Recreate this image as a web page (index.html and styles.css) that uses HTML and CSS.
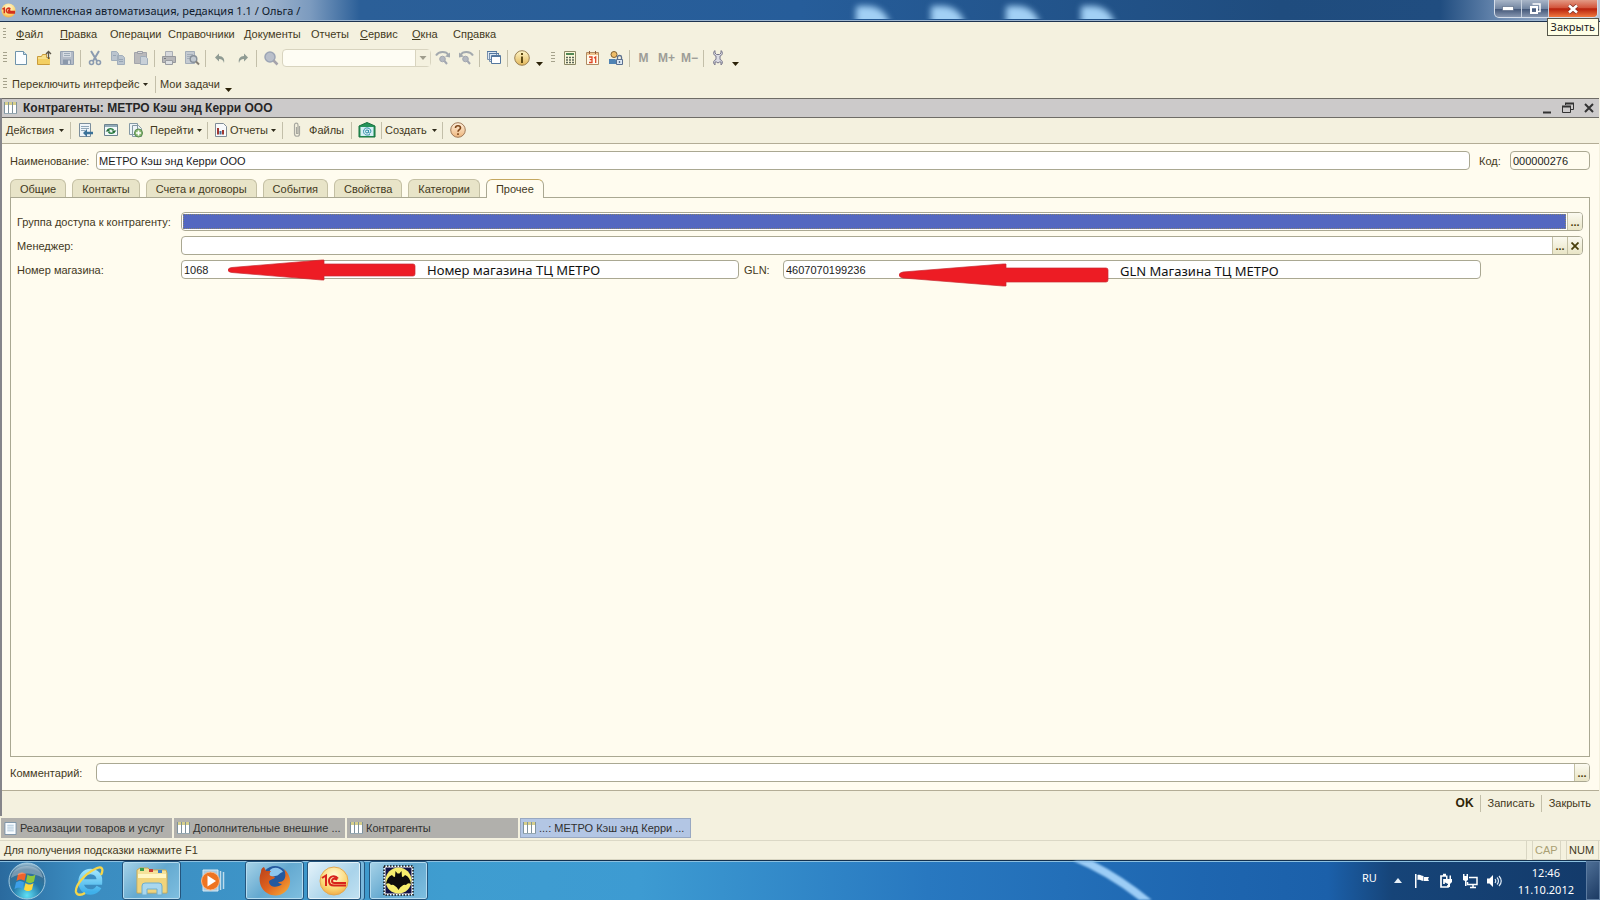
FILE: index.html
```html
<!DOCTYPE html>
<html lang="ru">
<head>
<meta charset="utf-8">
<title>Комплексная автоматизация, редакция 1.1</title>
<link rel="stylesheet" href="styles.css">
</head>
<body>
<svg class="defs" aria-hidden="true">
  <defs>
    <linearGradient id="gold" x2="0" y2="1"><stop offset="0" stop-color="#fff6c8"/><stop offset="1" stop-color="#e2b75a"/></linearGradient>
    <linearGradient id="peach" x2="0" y2="1"><stop offset="0" stop-color="#fff0dc"/><stop offset="1" stop-color="#edb57c"/></linearGradient>
    <radialGradient id="orb" cx=".5" cy=".9" r=".9"><stop offset="0" stop-color="#5fe0f5"/><stop offset=".45" stop-color="#2478a8"/><stop offset=".8" stop-color="#3b6c8f"/><stop offset="1" stop-color="#a5c8dc"/></radialGradient>
    <radialGradient id="one" cx=".5" cy=".3" r=".8"><stop offset="0" stop-color="#fffbd8"/><stop offset=".6" stop-color="#fbd774"/><stop offset="1" stop-color="#ee9a35"/></radialGradient>
    <linearGradient id="ie" x2="0" y2="1"><stop offset="0" stop-color="#9be2fb"/><stop offset="1" stop-color="#3fb0ea"/></linearGradient>
    <linearGradient id="fox" x2="1" y2="1"><stop offset="0" stop-color="#b8401a"/><stop offset=".5" stop-color="#e0631e"/><stop offset="1" stop-color="#f9b23a"/></linearGradient>
    <symbol id="table" viewBox="0 0 13 12"><path fill="#fff" d="M0 0h13v12H0z"/><path fill="#d6cf8c" d="M0 0h13v3H0z"/><path stroke="#7f929c" fill="none" d="M.5 0v12M4.5 0v12M8.5 0v12M12.5 0v12"/><path stroke="#93a6b0" d="M0 11.500h13"/></symbol>
    <symbol id="doc" viewBox="0 0 13 14"><path fill="#f8fcff" stroke="#7790a5" d="M.5.500h12v13H.5z"/><path stroke="#a9c4d8" d="M3 3.500h7M3 5.500h7M3 7.500h7M3 9.500h7"/></symbol>
    <symbol id="caret" viewBox="0 0 5 3"><path fill="#2e2a1a" d="M0 0h5L2.500 3z"/></symbol>
    <symbol id="caret-big" viewBox="0 0 7 4"><path fill="#2b2208" d="M0 0h7L3.500 4z"/></symbol>
  </defs>
</svg>

<header class="titlebar">
  <svg class="app-logo" viewBox="0 0 16 16"><circle cx="8" cy="8" r="7.500" fill="url(#one)"/><path fill="none" stroke="#d4301c" stroke-width="1.600" d="M1.500 6.500l2-1V11M10 6.300C8 4.500 5.500 6 5.700 8.300c.2 1.800 1.500 2.300 3 2.300H15M10 7.800c-1-.6-2-.3-2 .5s.5.700 1.200.7H15"/></svg>
  <h1 class="app-title">Комплексная автоматизация, редакция 1.1 / Ольга /</h1>
  <div class="glow"><i></i><i></i><i></i><i></i></div>
  <div class="sysbuttons">
    <button class="sys" aria-label="Свернуть"><svg width="12" height="5"><path fill="#fff" stroke="#4c5c78" stroke-width=".6" d="M.5.500h11v4H.5z"/></svg></button>
    <button class="sys" aria-label="Восстановить"><svg width="12" height="12"><path fill="none" stroke="#fff" stroke-width="1.500" d="M3.500 1h7.500v7.500H9"/><path fill="none" stroke="#fff" stroke-width="2" d="M2 4h6v6H2z"/></svg></button>
    <button class="sys sys-close" aria-label="Закрыть окно"><svg width="12" height="10"><path stroke="#7d3129" stroke-width="4" d="M2 1.500l8 7M10 1.500l-8 7"/><path stroke="#fff" stroke-width="2.600" d="M2 1.500l8 7M10 1.500l-8 7"/></svg></button>
    <span class="tooltip">Закрыть</span>
  </div>
</header>

<nav class="menu">
  <i class="grip"></i>
  <a href="#"><u>Ф</u>айл</a><a href="#"><u>П</u>равка</a><a href="#">Операции</a><a href="#">Справочники</a><a href="#">Документы</a><a href="#">Отчеты</a><a href="#"><u>С</u>ервис</a><a href="#"><u>О</u>кна</a><a href="#">Сп<u>р</u>авка</a>
</nav>

<div class="toolbar">
  <i class="grip"></i>
  <button class="tool" aria-label="Новый"><svg width="16" height="16"><path fill="#fafdff" stroke="#6e93ab" d="M2.500 1.500h8l3 3v10h-11z"/><path fill="#c5dcea" stroke="#6e93ab" d="M10.500 1.500v3h3"/></svg></button>
  <button class="tool" aria-label="Открыть"><svg width="16" height="16"><path fill="#f8e08a" stroke="#c99b3a" d="M1.500 6.500h4l1-2h4v3h3v7h-12z"/><path fill="#f3cf62" d="M2 9h12v5H2z"/><path fill="none" stroke="#5c5648" stroke-width="1.300" d="M12.500 9V1.500M10 4l2.500-2.500L15 4"/></svg></button>
  <button class="tool" aria-label="Сохранить"><svg width="16" height="16"><path fill="#b3bbc7" stroke="#96a2b2" d="M1.500 1.500h13v13h-13z"/><path fill="#d5dbe2" d="M4 2h8v5H4z"/><path stroke="#9daab7" d="M5 3.500h6M5 5.500h6"/><path fill="#8a98aa" d="M4 9.500h8V14H4z"/><path fill="#d5dbe2" d="M9 10.500h2V14H9z"/></svg></button>
  <i class="sep"></i>
  <button class="tool" aria-label="Вырезать"><svg width="16" height="16"><path stroke="#8b9bb0" stroke-width="2" d="M4 1l6 10M12 1L6 11"/><circle cx="4.500" cy="12.500" r="2" fill="none" stroke="#8b9bb0" stroke-width="1.600"/><circle cx="11.500" cy="12.500" r="2" fill="none" stroke="#8b9bb0" stroke-width="1.600"/></svg></button>
  <button class="tool" aria-label="Копировать"><svg width="16" height="16"><path fill="#bac4ce" stroke="#a1aebb" d="M1.500 1.500h5l2 2v7h-7zM7.500 5.500h5l2 2v7h-7z"/><path stroke="#97a5b4" d="M9 9.500h4M9 11.500h4M3 5.500h3"/></svg></button>
  <button class="tool" aria-label="Вставить"><svg width="16" height="16"><path fill="#b9b9bb" stroke="#a3a5ab" d="M1.500 2.500h12v11h-12z"/><path fill="#dcdcdc" stroke="#9c9fa6" d="M4.500 1.500h5v2h-5z"/><path fill="#c8d0d8" stroke="#a0adba" d="M7.500 6.500h5l2 2v6h-7z"/></svg></button>
  <i class="sep"></i>
  <button class="tool" aria-label="Печать"><svg width="16" height="16"><path fill="#d7d9dc" stroke="#aaaeb5" d="M4.500 1.500h7v5h-7z"/><path fill="#b6b6b8" stroke="#96989c" d="M1.500 6.500h13v6h-13z"/><path fill="#dde0e2" stroke="#999ca1" d="M4.500 10.500h7v4h-7z"/><path stroke="#777a7e" d="M3 8.500h2"/></svg></button>
  <button class="tool" aria-label="Просмотр"><svg width="16" height="16"><path fill="#c4cad1" stroke="#a3adb8" d="M1.500 1.500h9v12h-9z"/><path stroke="#a3adb8" d="M3 4.500h6M3 6.500h4M3 8.500h3"/><circle cx="9.500" cy="9" r="3.300" fill="#c1c8cf" stroke="#868f99" stroke-width="1.400"/><path stroke="#868076" stroke-width="2" d="M12 11.500l3 3"/></svg></button>
  <i class="sep"></i>
  <button class="tool" aria-label="Отменить"><svg width="16" height="16"><path fill="#8f9b93" d="M3 7.500l4-4V6c4 0 6 3 5 7-1-3-2-4-5-4v2.500z"/></svg></button>
  <button class="tool" aria-label="Вернуть"><svg width="16" height="16"><path fill="#8f9b93" d="M13 7.500l-4-4V6c-4 0-6 3-5 7 1-3 2-4 5-4v2.500z"/></svg></button>
  <i class="sep"></i>
  <button class="tool" aria-label="Найти"><svg width="16" height="16"><circle cx="7" cy="7" r="5" fill="#b9bfca" stroke="#9ca5b5" stroke-width="1.500"/><path stroke="#a5a3ab" stroke-width="2.500" d="M10.500 10.500l4 4"/></svg></button>
  <div class="combo"><input aria-label="Строка поиска" type="text"><button aria-label="История поиска"><svg width="8" height="4" viewBox="0 0 7 4"><path fill="#9f9d8c" d="M0 0h7L3.500 4z"/></svg></button></div>
  <button class="tool" aria-label="Найти следующий"><svg width="16" height="16"><path fill="none" stroke="#a3a9ae" stroke-width="2" d="M1 5.500C4 1 11 1 13.500 5"/><path fill="#a3a9ae" d="M10 6.500l5-4v5z"/><circle cx="7.500" cy="9" r="2.800" fill="#b4b8c0" stroke="#a2a7b0"/><path stroke="#a2a7b0" stroke-width="2" d="M9.500 11l2.500 3"/></svg></button>
  <button class="tool" aria-label="Найти предыдущий"><svg width="16" height="16"><path fill="none" stroke="#a3a9ae" stroke-width="2" d="M15 5.500C12 1 5 1 2.500 5"/><path fill="#a3a9ae" d="M6 6.500l-5-4v5z"/><circle cx="7.500" cy="9" r="2.800" fill="#b4b8c0" stroke="#a2a7b0"/><path stroke="#a2a7b0" stroke-width="2" d="M9.500 11l2.500 3"/></svg></button>
  <i class="sep"></i>
  <button class="tool" aria-label="Окна"><svg width="16" height="16"><path fill="#dce7f2" stroke="#7890ad" d="M1.500 1.500h9v8h-9zM3.500 3.500h9v8h-9z"/><path fill="#fff" stroke="#55789f" d="M5.500 5.500h9v8h-9z"/><path stroke="#55789f" d="M1 1.500h10M3 3.500h10M5 6.500h10"/></svg></button>
  <i class="sep"></i>
  <button class="tool" aria-label="О программе"><svg width="16" height="16"><circle cx="8" cy="8" r="7.300" fill="url(#gold)" stroke="#9a8052"/><path fill="#5e4a14" d="M7 6.500h2V13H7zM7 3h2v2H7z"/></svg></button>
  <button class="more" aria-label="Ещё"><svg width="7" height="4"><use href="#caret-big"/></svg></button>
  <i class="grip"></i>
  <button class="tool" aria-label="Калькулятор"><svg width="16" height="16"><path fill="#fcf8da" stroke="#8b8866" d="M2.500 1.500h11v13h-11z"/><path fill="#528755" d="M4 3h8v2H4z"/><path stroke="#586458" stroke-width="1.500" stroke-dasharray="2 1" d="M4 7.500h8M4 10h8M4 12.500h8"/></svg></button>
  <button class="tool" aria-label="Календарь"><svg width="16" height="16"><path fill="#fffbec" stroke="#b08b62" d="M1.500 2.500h12v12h-12z"/><path fill="#edc38d" d="M2 3h11v2H2z"/><path stroke="#955a38" d="M4.500 1v3M10.500 1v3"/><path fill="none" stroke="#dd4425" stroke-width="1.300" d="M4 7h3v5.500H4M4.800 9.700H7M9 8l1.700-1V13"/></svg></button>
  <button class="tool" aria-label="Пользователь"><svg width="16" height="16"><circle cx="6" cy="4.500" r="3" fill="#efbd67" stroke="#7e6031"/><path fill="#4f83b4" d="M1 14V9h6l3 2v3z"/><path fill="#dbe7f3" stroke="#5a6f8e" d="M8.500 9.500h6v5h-6z"/><path fill="none" stroke="#5a6f8e" stroke-width="1.300" d="M9.500 9V7c0-2 4-2 4 0v2M11.500 11v2"/></svg></button>
  <i class="sep"></i>
  <button class="tool mem">M</button><button class="tool mem">M+</button><button class="tool mem">M−</button>
  <i class="sep"></i>
  <button class="tool" aria-label="Настройка"><svg width="16" height="16"><path fill="#dcdce4" stroke="#77768a" d="M5 .5C3 2 3 5 6 6v3.500c-3 1-3 4-1 5.500V12h1.500l1.500 1 1.500-1H11v3c2-1.500 2-4.500-1-5.500V6c3-1 3-4 1-5.500V3L9.500 4.500h-3L5 3z"/></svg></button>
  <button class="more" aria-label="Ещё"><svg width="7" height="4"><use href="#caret-big"/></svg></button>
</div>

<div class="toolbar toolbar-user">
  <i class="grip"></i>
  <button class="txt txt-switch">Переключить интерфейс <svg width="5" height="3"><use href="#caret"/></svg></button>
  <i class="sep"></i>
  <button class="txt txt-tasks">Мои задачи</button>
  <button class="more" aria-label="Ещё"><svg width="7" height="4"><use href="#caret-big"/></svg></button>
</div>

<main class="window">
  <div class="win-title">
    <svg width="13" height="12"><use href="#table"/></svg>
    <h2>Контрагенты: МЕТРО Кэш энд Керри ООО</h2>
    <button aria-label="Свернуть форму"><svg width="12" height="12"><path fill="#333" d="M2 9.500h8v2H2z"/></svg></button>
    <button aria-label="Восстановить форму"><svg width="12" height="12"><path fill="none" stroke="#333" d="M3.500 3V1.500h8v6H9M.5 4.500h8v6h-8z"/><path stroke="#333" stroke-width="2" d="M3 1.500h9M0 4.500h9"/></svg></button>
    <button aria-label="Закрыть форму"><svg width="12" height="12"><path stroke="#333" stroke-width="2" d="M2 2l8 8M10 2l-8 8"/></svg></button>
  </div>

  <div class="toolbar form-bar">
    <button class="txt w-actions">Действия <svg width="5" height="3"><use href="#caret"/></svg></button>
    <i class="sep"></i>
    <button class="tool" aria-label="Записать и перейти"><svg width="16" height="16"><path fill="#eef4f8" stroke="#7b8e9c" d="M1.500 1.500h11v13h-11z"/><path stroke="#90a7b8" d="M3 4.500h8M3 6.500h8M3 8.500h4"/><path fill="#3b7299" d="M5 11l4-4v2.700h6v2.600H9V15z"/></svg></button>
    <button class="tool" aria-label="Обновить"><svg width="16" height="16"><path fill="#f3f8fa" stroke="#6d828f" d="M1.500 2.500h13v11h-13z"/><path fill="#92abb8" d="M2 3h12v2H2z"/><path fill="none" stroke="#2d8044" stroke-width="1.500" d="M4.500 8.500C5 6.500 9 6 10.500 8M11.500 9.500c-.5 2-4.500 2.500-6 .5"/><path fill="#256c38" d="M8.500 8.500h5L11 11zM2.500 9.500h5L5 7z"/></svg></button>
    <button class="tool" aria-label="Добавить копированием"><svg width="16" height="16"><path fill="#eef4f7" stroke="#8499a5" d="M1.500 1.500h8v11h-8zM4.500 3.500h6l3 3v8h-9z"/><circle cx="10.500" cy="11" r="4" fill="#8cba73" stroke="#578950"/><path stroke="#fff" stroke-width="1.600" d="M8 11h5M10.500 8.500v5"/></svg></button>
    <button class="txt w-goto">Перейти <svg width="5" height="3"><use href="#caret"/></svg></button>
    <i class="sep"></i>
    <button class="txt w-reports"><svg width="13" height="15"><path fill="#f8fafb" stroke="#7f8b95" d="M1.500.500h8l3 3v10h-11z"/><path stroke="#a03832" stroke-width="2" d="M4 11.500V5M9 11.500V7"/><path stroke="#416d9a" stroke-width="2" d="M6.500 11.500V8"/></svg><span>Отчеты</span> <svg width="5" height="3"><use href="#caret"/></svg></button>
    <i class="sep"></i>
    <button class="txt w-files"><svg width="10" height="16"><path fill="none" stroke="#a8a8a0" stroke-width="1.200" d="M7.500 4v8c0 3-5 3-5 0V3c0-2.500 3.500-2.500 3.500 0v8.500H4.500V5"/></svg><span>Файлы</span></button>
    <i class="sep"></i>
    <button class="tool" aria-label="Почта"><svg width="18" height="16"><path fill="#25945a" stroke="#16703d" d="M1 4l8-3.500L17 4v11H1z"/><path fill="#d5eff5" d="M2.500 5h13v9h-13z"/><path fill="none" stroke="#338da8" d="M12 12.500c-3 1.500-6.500 0-6.500-3s3-4 4.500-3.500c2.500.5 3.500 3 2.500 4.500-1 1-2 .5-2-.5V8"/><circle cx="9" cy="9.500" r="1.500" fill="none" stroke="#338da8"/></svg></button>
    <i class="sep"></i>
    <button class="txt w-create">Создать <svg width="5" height="3"><use href="#caret"/></svg></button>
    <i class="sep"></i>
    <button class="tool" aria-label="Справка"><svg width="16" height="16"><circle cx="8" cy="8" r="7.300" fill="url(#peach)" stroke="#a07a58"/><path fill="none" stroke="#7d4518" stroke-width="1.600" d="M5.500 6c0-3 5-3 5 0 0 1.600-2.500 1.600-2.500 3.800M8 11.200V13"/></svg></button>
  </div>

  <form class="form" onsubmit="return false">
    <div class="row row-head">
      <label for="name">Наименование:</label>
      <input class="field grow" id="name" type="text" value="МЕТРО Кэш энд Керри ООО">
      <label class="label-code" for="code">Код:</label>
      <input class="field field-code" id="code" type="text" value="000000276">
    </div>

    <div class="tabs" role="tablist">
      <button role="tab">Общие</button><button role="tab">Контакты</button><button role="tab">Счета и договоры</button><button role="tab">События</button><button role="tab">Свойства</button><button role="tab">Категории</button><button role="tab" class="active" aria-selected="true">Прочее</button>
    </div>

    <section class="panel">
      <div class="row">
        <label for="group">Группа доступа к контрагенту:</label>
        <div class="field picker grow focused"><input id="group" type="text"><button aria-label="Выбрать группу">...</button></div>
      </div>
      <div class="row">
        <label for="manager">Менеджер:</label>
        <div class="field picker grow"><input id="manager" type="text"><button aria-label="Выбрать менеджера">...</button><button aria-label="Очистить"><svg width="8" height="8"><path stroke="#4a400c" stroke-width="1.800" d="M.5.500l7 7M7.500.500l-7 7"/></svg></button></div>
      </div>
      <div class="row row-shop">
        <label for="shop">Номер магазина:</label>
        <div class="noted noted-shop">
          <input class="field" id="shop" type="text" value="1068">
          <div class="note"><svg width="188" height="22" viewBox="0 0 188 22"><path fill="#ed1c24" stroke="#c92a30" stroke-width=".7" d="M0 11q0-2 4-2.500L94 1h2v4h89q2 0 2 2v8q0 2-2 2H96v4h-2L4 13.500Q0 13 0 11z"/></svg><span>Номер магазина ТЦ МЕТРО</span></div>
        </div>
        <label class="label-gln" for="gln">GLN:</label>
        <div class="noted noted-gln">
          <input class="field" id="gln" type="text" value="4607070199236">
          <div class="note"><svg width="210" height="24" viewBox="0 0 210 24"><path fill="#ed1c24" stroke="#c92a30" stroke-width=".7" d="M0 12q0-2 4-3L104 1h3v4h100q2 0 2 2v10q0 2-2 2H107v4h-3L4 15q-4-1-4-3z"/></svg><span>GLN Магазина ТЦ МЕТРО</span></div>
        </div>
      </div>
    </section>

    <div class="row row-comment">
      <label for="comment">Комментарий:</label>
      <div class="field picker grow"><input id="comment" type="text"><button aria-label="Открыть комментарий">...</button></div>
    </div>
  </form>

  <footer class="actions">
    <button class="ok">OK</button><i class="sep"></i><button>Записать</button><i class="sep"></i><button>Закрыть</button>
  </footer>
</main>

<nav class="wintabs">
  <button><svg width="13" height="13"><use href="#doc"/></svg>Реализации товаров и услуг</button>
  <button><svg width="13" height="12"><use href="#table"/></svg>Дополнительные внешние ...</button>
  <button><svg width="13" height="12"><use href="#table"/></svg>Контрагенты</button>
  <button class="current"><svg width="13" height="12"><use href="#table"/></svg>...: МЕТРО Кэш энд Керри ...</button>
</nav>

<div class="status">
  <span class="hint">Для получения подсказки нажмите F1</span>
  <span class="cap">CAP</span><span class="num">NUM</span>
</div>

<footer class="taskbar">
  <svg class="streak" viewBox="0 0 100 39"><path fill="none" stroke="#9ccdf6" stroke-width="8" d="M2-4Q42 12 82 46"/></svg>
  <button class="task task-start" aria-label="Пуск"><svg width="38" height="38" viewBox="0 0 38 38"><circle cx="19" cy="19" r="18" fill="url(#orb)" stroke="#a4cbe0"/><path fill="#f0642d" d="M10 12c3-2 5-2 8 0l-1.500 7c-3-2-5-2-8 0z"/><path fill="#8cc63f" d="M19.500 12.500c3 2 5 2 8 0L26 19.500c-3 2-5 2-8 0z"/><path fill="#3d9fe8" d="M8 20.500c3-2 5-2 8 0L14.500 27c-3-2-5-1.500-8 0z"/><path fill="#ffd83c" d="M17.500 21c3 2 5 2 8 0L24 27.500c-3 2-5 2-8 0z"/><path fill="#fff" opacity=".3" d="M3 16C5 0 33 0 35 16 25 10 13 10 3 16z"/></svg></button>
  <button class="task" aria-label="Internet Explorer"><svg width="32" height="32" viewBox="0 0 32 32"><path fill="none" stroke="url(#ie)" stroke-width="5.500" d="M7 17h18.500C26 10 22 6.500 16.500 6.500 11 6.500 7 11 7 17s4 10 9.500 10c4 0 6.500-1.500 8.500-5"/><path fill="none" stroke="#f5d64a" stroke-width="2.300" d="M27 10c3-6 1-10-6-6C11 9 1 20 2 27c1 4 6 3 9 1"/></svg></button>
  <button class="task open" aria-label="Проводник"><svg width="32" height="30" viewBox="0 0 32 30"><path fill="#f5e29a" stroke="#c8a850" d="M1 6V4l3-2h8l2 2h16l1 3v20H1z"/><path fill="#fff6c5" d="M2 8h28v5H2z"/><path fill="#3c9d4a" d="M4 2h4v3H4z"/><path fill="#c93b32" d="M13 3h4v3h-4z"/><path fill="#3d82c8" d="M22 4h4v3h-4z"/><path fill="#f0d47c" d="M2 12h28v14H2z"/><path fill="#a9d7ee" stroke="#6caed0" d="M6 29V20q0-3 3-3h14q3 0 3 3v9h-5v-6H11v6z"/></svg></button>
  <button class="task" aria-label="Проигрыватель"><svg width="26" height="24" viewBox="0 0 26 24"><path fill="#a8cbe2" stroke="#d8eaf5" d="M3 1h15v21H3z"/><path stroke="#bfdcec" stroke-width="1.500" d="M20.500 2v19M23.500 3v17"/><circle cx="10.500" cy="12" r="9" fill="#ee7422" stroke="#fbb989"/><path fill="#fff" d="M7.500 6.500l8.500 5.500-8.500 5.500z"/></svg></button>
  <button class="task open" aria-label="Firefox"><svg width="32" height="32" viewBox="0 0 32 32"><circle cx="16" cy="14" r="13" fill="#24599f"/><path fill="#8dc6ee" d="M11 5c4-4 11-2 13 2-3 0-4 4-8 4-2 0-3 2-6 0z"/><path fill="url(#fox)" d="M2 7c0-3 1-4 3-5l2 4 5 0c-2 2-2 4 0 5l4 1c-1 3-6 2-6 5 1 6 9 6 13 2-2 0-3-1-4-2 7 1 9-6 6-13 8 7 8 17 1 23-7 6-18 4-23-4C0 18 0 12 2 7z"/></svg></button>
  <button class="task open bright" aria-label="1С"><svg width="30" height="30" viewBox="0 0 30 30"><circle cx="15" cy="15" r="14" fill="url(#one)" stroke="#e5a851"/><path fill="none" stroke="#d8231c" stroke-width="2" d="M3 12l4-2.500V20M19 12.500c-3-4-9-2.500-9 2.500 0 3 2 4.500 5 4.500h12M18 14c-2-2.300-5-1.500-5 1 0 1.500 1 2 2.500 2H27"/></svg></button>
  <button class="task open" aria-label="The Bat!"><svg width="31" height="31" viewBox="0 0 31 31"><path fill="#fff" stroke="#111" stroke-dasharray="1.500 1.500" stroke-width="1.500" d="M1 1h29v29H1z"/><path fill="#131345" d="M2.500 2.500h26v26h-26z"/><circle cx="15.500" cy="15.500" r="13" fill="#f5ed6e"/><path fill="#0c0c0c" d="M12.500 6l2 2.500h2l2-2.500.5 6q2 0 3-2 5 2 6 9-3-2-5 1-2-1-4 1-2 1-3.500 4-1.500-3-3.500-4-2-2-4-1-2-3-5-1 1-7 6-9 1 2 3 2z"/></svg></button>
  <div class="tray">
    <span class="lang">RU</span>
    <button class="expand" aria-label="Скрытые значки"><svg width="8" height="5"><path fill="#e8f1f8" d="M0 5l4-5 4 5z"/></svg></button>
    <button aria-label="Центр поддержки"><svg width="16" height="16"><path fill="#fff" d="M1 1h1.500v14H1zM3.500 2c3-1 4 1 6 1v5c-2 0-3-2-6-1zM10 4h5l-1 2 1 2h-5z"/></svg></button>
    <button aria-label="Питание"><svg width="16" height="16"><path fill="none" stroke="#fff" stroke-width="1.700" d="M8 3H3v11h7v-2M5 1.500h3M6 6v5"/><path fill="#fff" d="M6 6h8v3l-2 2v3h-2v-3L6 9zM8 2.500h1.500V6H8zM11.500 2.500H13V6h-1.500z"/></svg></button>
    <button aria-label="Сеть"><svg width="16" height="16"><path fill="none" stroke="#fff" stroke-width="1.500" d="M7 4.500h8v7H5.500V9M8 14.500h6M11 11.500v3"/><path fill="#fff" d="M1 3h5v4L4.500 8v5H3V8L1 7zM1 1h1.500v2H1zM4.500 1H6v2H4.500z"/></svg></button>
    <button aria-label="Громкость"><svg width="16" height="16"><path fill="#fff" d="M1 5.500h2.500L7 2v12l-3.500-3.500H1z"/><path fill="none" stroke="#dce8f4" stroke-width="1.200" d="M9 6q1.500 2 0 4M11 4.500q3 3.500 0 7M13 3q4.500 5 0 10"/></svg></button>
    <div class="clock"><span>12:46</span><span>11.10.2012</span></div>
    <button class="desk" aria-label="Показать рабочий стол"></button>
  </div>
</footer>
</body>
</html>
```
FILE: styles.css
```css
* { box-sizing: border-box; }

body {
  margin: 0;
  min-height: 100vh;
  display: flex;
  flex-direction: column;
  background: #f4f1df;
  color: #43391c;
  font-family: "Liberation Sans", Arial, sans-serif;
  font-size: 11px;
  line-height: 14px;
}

button, input {
  font: inherit;
  color: inherit;
  margin: 0;
  padding: 0;
  border: 0;
  background: none;
  outline: 0;
}

h1, h2 { margin: 0; font-size: inherit; }
a { color: inherit; text-decoration: none; }
svg { display: block; flex: none; }
.defs { position: absolute; width: 0; height: 0; }

/* Title bar */
.titlebar {
  position: relative;
  display: flex;
  align-items: center;
  height: 22px;
  padding-left: 1px;
  border-bottom: 1px solid #1d3350;
  box-shadow: inset 0 -1px #9db6d0;
  background: linear-gradient(90deg, #9db3cd 0, #a3b7cf 260px, #7c9bbf 310px, #2b5f98 360px, #265d9a 50%, #1f4c7e 80%, #204d80 90%, #6f8db3 94%, #b9c6d8 100%);
}
.app-logo { width: 15px; height: 15px; }
.app-title {
  margin-left: 5px;
  font-family: "Noto Sans", sans-serif;
  font-size: 11px;
  font-weight: 400;
  color: #101b2c;
}
.glow {
  position: absolute;
  inset: 0 auto 2px 53%;
  display: flex;
  gap: 41px;
  overflow: hidden;
  padding: 6px 8px 0;
}
.glow i {
  width: 34px;
  height: 22px;
  border-radius: 4px 30px 0 0;
  background: #a2d0f5;
  filter: blur(3px);
}
.sysbuttons {
  position: relative;
  display: flex;
  align-self: flex-start;
  margin-left: auto;
  margin-right: 2px;
  height: 18px;
  border: 1px solid #d5deea;
  border-top: 0;
  border-radius: 0 0 5px 5px;
  background: linear-gradient(#a9b6c8, #7386a2 50%, #45597a 55%, #8797b0);
}
.sys {
  display: grid;
  place-items: center;
  width: 27px;
  border-right: 1px solid #c8d2df;
}
.sys-close {
  width: 48px;
  border: 0;
  border-radius: 0 0 4px 0;
  background: linear-gradient(#e39a85, #d3553c 45%, #b8210c 52%, #f0793f);
}
.tooltip {
  position: absolute;
  top: 18px;
  right: -2px;
  z-index: 2;
  padding: 0 3px;
  border: 1px solid #55564a;
  background: #ffffe6;
  color: #222;
  font-family: "Noto Sans", sans-serif;
  line-height: 16px;
}

/* Menu and toolbars */
.menu {
  display: grid;
  grid-template-columns: 13px 44px 50px 58px 76px 67px 49px 52px 41px auto;
  align-items: center;
  height: 24px;
  padding-left: 3px;
}
.grip {
  width: 3px;
  height: 12px;
  background: repeating-linear-gradient(#a5a28c 0 1px, transparent 1px 3px);
}
.toolbar {
  display: flex;
  align-items: center;
  height: 24px;
  padding-left: 3px;
}
.toolbar > .grip { width: 4px; margin-right: 2px; }
.tool {
  display: grid;
  place-items: center;
  width: 23px;
  height: 22px;
}
.sep {
  width: 1px;
  height: 17px;
  margin: 0 2px;
  background: #c3bfa9;
}
.mem { color: #9d9d97; font-size: 12px; font-weight: 700; }
.more {
  align-self: flex-end;
  width: 13px;
  padding: 0 3px 4px;
}
.toolbar > .more + .grip { margin: 0 3px 0 5px; }
.combo {
  display: flex;
  width: 149px;
  height: 18px;
  border: 1px solid #d8d4bf;
  border-radius: 4px;
  background: #fefdf4;
}
.combo input { flex: 1; min-width: 0; }
.combo button {
  display: grid;
  place-items: center;
  width: 15px;
  border-left: 1px solid #d8d4bf;
  background: #f4f1df;
}
.txt {
  display: flex;
  align-items: center;
  justify-content: space-between;
  height: 20px;
  white-space: nowrap;
}
.toolbar-user { height: 28px; }
.toolbar-user .more { padding-bottom: 6px; }
.txt-switch { width: 144px; padding: 0 5px 0 3px; }
.txt-tasks { width: 64px; padding-left: 2px; }

/* Document window */
.window {
  flex: 1;
  display: flex;
  flex-direction: column;
  border-left: 2px solid #85858a;
  margin-right: 1px;
}
.win-title {
  display: flex;
  align-items: center;
  height: 20px;
  padding: 0 4px 0 2px;
  border: solid #6e6c66;
  border-width: 1px 0;
  background: #cccaca;
  color: #262626;
}
.win-title h2 { flex: 1; margin-left: 6px; font-size: 12px; }
.win-title button { margin-left: 9px; }
.form-bar {
  height: 26px;
  padding: 0 0 1px 4px;
  border-bottom: 1px solid #b3ad96;
}
.form-bar .tool { width: 25px; }
.w-actions { width: 62px; padding-right: 4px; }
.w-goto { width: 57px; padding: 0 3px 0 2px; }
.w-reports { width: 70px; padding: 0 4px; }
.w-files { width: 64px; padding: 0 5px 0 7px; }
.w-create { width: 56px; padding: 0 3px 0 1px; }

.form {
  flex: 1;
  display: flex;
  flex-direction: column;
  padding: 7px 9px 8px 8px;
  background: #fffcef;
}
.row { display: flex; align-items: center; }
.row > label:first-child { width: 164px; }
.row-head > label:first-child, .row-comment > label:first-child { width: 86px; }
.grow { flex: 1; min-width: 0; }
.field {
  height: 19px;
  border: 1px solid #aaa892;
  border-radius: 4px;
  background: #fff;
  color: #1c1c1c;
  padding: 0 2px;
}
.row > .label-code { margin-left: 9px; width: 31px; }
.field-code { width: 80px; background: #fffcef; }

.tabs {
  display: flex;
  gap: 6px;
  margin-top: 9px;
}
.tabs button {
  height: 18px;
  padding: 0 9px;
  border: 1px solid #c4c0a4;
  border-bottom: 0;
  border-radius: 6px 6px 0 0;
  background: #e8e4c8;
}
.tabs .active {
  height: 19px;
  margin-bottom: -1px;
  border-color: #c4a860 #aaa892 #aaa892;
  background: #fffcef;
  z-index: 1;
}
.panel {
  flex: 1;
  display: flex;
  flex-direction: column;
  gap: 5px;
  padding: 14px 6px;
  border: 1px solid #aaa892;
}
.picker { display: flex; padding: 0; overflow: hidden; }
.picker input { flex: 1; min-width: 0; }
.picker button {
  display: grid;
  place-items: center;
  width: 15px;
  border-left: 1px solid #c4c0a4;
  background: linear-gradient(#fbfaf0, #e9e5c6);
  color: #4a400c;
  font-weight: 700;
}
.focused input {
  margin: 1px;
  background: #5468c0;
  outline: 1px dotted #8d8a6c;
  outline-offset: -1px;
}
.row-shop { padding-right: 102px; }
.noted { position: relative; display: flex; min-width: 0; }
.noted .field { flex: 1; min-width: 0; }
.noted-shop { flex: 558; }
.noted-gln { flex: 698; }
.label-gln { margin-left: 5px; width: 39px; }
.note {
  position: absolute;
  top: -1px;
  left: 47px;
  display: flex;
  align-items: center;
  gap: 11px;
  color: #111;
  font-family: "Noto Sans", sans-serif;
  font-size: 13px;
  white-space: nowrap;
}
.noted-gln .note { top: 3px; left: 116px; height: 24px; }
.noted-gln .note span { margin-bottom: 8px; }
.row-comment { margin-top: 6px; }

.actions {
  display: flex;
  align-items: center;
  justify-content: flex-end;
  height: 26px;
  padding: 0 8px 1px 0;
  border-top: 1px solid #b3ad96;
}
.actions .sep { margin: 0 7px 0 6px; }
.actions .ok { font-size: 12px; font-weight: 700; color: #2f2608; }

/* Open window list */
.wintabs {
  display: flex;
  gap: 2px;
  padding: 2px 1px;
  border-bottom: 1px solid #dbd8c6;
}
.wintabs button {
  display: flex;
  align-items: center;
  gap: 3px;
  width: 171px;
  height: 20px;
  padding-left: 3px;
  background: #b1b0ac;
  color: #303030;
  white-space: nowrap;
}
.wintabs .current { background: #b3c6e4; border: 1px solid #98a8c2; padding-left: 2px; }

.status { display: flex; gap: 5px; height: 19px; padding-right: 1px; line-height: 18px; }
.status span { border: 1px solid #d9d6c3; border-top: 0; padding: 0 2px; }
.status .hint { flex: 1; padding-left: 4px; border-left: 0; }
.status .cap { width: 29px; color: #aaa074; }
.status .num { width: 33px; }

/* Desktop taskbar */
.taskbar {
  position: relative;
  display: flex;
  align-items: stretch;
  height: 40px;
  padding-left: 3px;
  border-top: 1px solid #12304f;
  box-shadow: inset 0 1px #8cc0e0;
  background: linear-gradient(90deg, #2a6a9e 0, #3b8cc0 5%, #3f9dd0 28%, #3d9bd2 40%, #2878c0 58%, #1e66b0 75%, #1b60aa 83%, #164478 87%, #133a6a 100%);
}
.streak {
  position: absolute;
  left: 67%;
  top: 0;
  width: 100px;
  height: 39px;
  overflow: hidden;
  filter: blur(1px);
}
.task {
  display: grid;
  place-items: center;
  width: 58px;
  margin-right: 3px;
}
.task-start { width: 48px; margin-right: 10px; }
.task.open {
  width: 59px;
  border: 1px solid #24557d;
  border-radius: 3px;
  box-shadow: inset 0 0 0 1px #b5dcf0;
  background: linear-gradient(135deg, #a8d3e8, #64a9d0 50%, #7fbfe0);
}
.task.bright {
  width: 54px;
  margin-right: 8px;
  background: linear-gradient(135deg, #e6f3fa, #a9d3ea 60%, #c2e2f2);
  box-shadow: inset 0 0 0 1px #e4f3fa, 3px 0 #7ab8dc, 4px 0 #24557d;
}
.tray {
  display: flex;
  align-items: center;
  gap: 8px;
  margin-left: auto;
  color: #fff;
  font-family: "Noto Sans", sans-serif;
}
.lang { margin: 0 9px 6px 0; }
.expand { margin-right: 4px; }
.clock { display: grid; justify-items: center; line-height: 17px; margin: 0 4px 0 8px; }
.desk {
  width: 14px;
  height: 39px;
  border: 1px solid #5c7ba0;
  background: linear-gradient(135deg, #4e6f96, #1c3a63);
}
```
